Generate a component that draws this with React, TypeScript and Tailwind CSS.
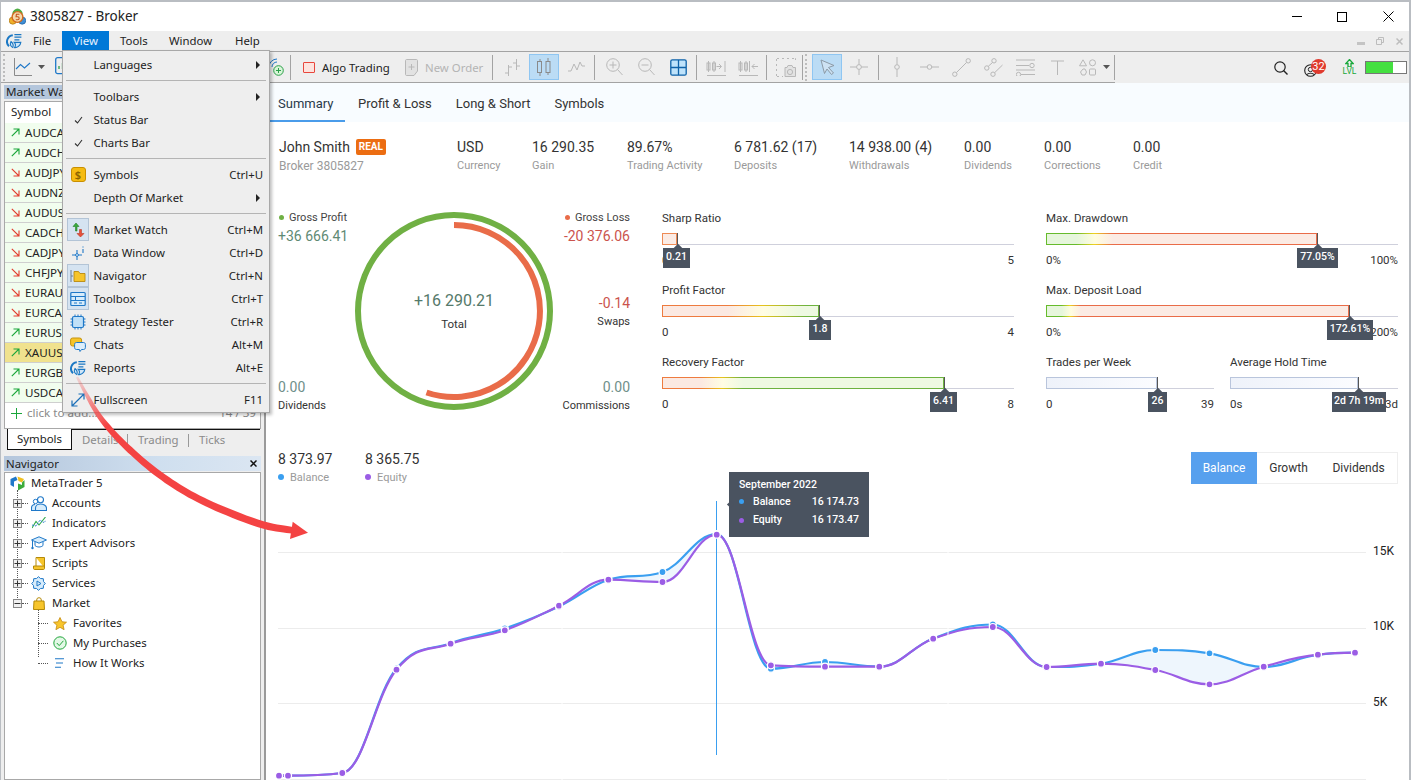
import { ReactNode } from "react";

const UI = "[font-family:'Noto_Sans',sans-serif]";

type P = { x: number; y: number };
type Seg = { c1: P; c2: P; to: P };

const purple: [number, number][] = [
  [279, 775.7], [288, 775.7], [342.3, 773], [396.5, 669.7], [450.6, 643.7], [504.8, 630.3], [559, 605.7], [608.4, 579.7],
  [662.5, 582], [716.7, 534.7], [770.9, 665.3], [825, 666.7], [879.3, 666.7], [933.2, 638.7], [992.8, 627], [1046.6, 667],
  [1101, 663.7], [1155.3, 670], [1209.5, 684.3], [1263.7, 666.7], [1317.9, 654.7], [1355, 652.7],
];
const blue: [number, number][] = [
  [279, 775.7], [288, 775.7], [342.3, 773], [396.5, 668.5], [450.6, 643.2], [504.8, 628.5], [559, 606.5], [608.4, 579.7],
  [662.5, 572], [716.7, 534.2], [770.9, 668.7], [825, 662], [879.3, 666.5], [933.2, 638.5], [992.8, 624.5], [1046.6, 667],
  [1101, 663.7], [1155.3, 650], [1209.5, 653.3], [1263.7, 667], [1317.9, 655], [1355, 652.7],
];

// same curve maths as highcharts spline
function spline(pts: [number, number][]): Seg[] {
  const ctrl = (i: number) => {
    const [x, y] = pts[i];
    const [lx, ly] = pts[Math.max(i - 1, 0)];
    const [nx, ny] = pts[Math.min(i + 1, pts.length - 1)];
    if (i === 0 || i === pts.length - 1) return { l: { x, y }, r: { x, y } };
    let lcy = (1.5 * y + ly) / 2.5;
    let rcy = (1.5 * y + ny) / 2.5;
    const lcx = (1.5 * x + lx) / 2.5;
    const rcx = (1.5 * x + nx) / 2.5;
    const fix = ((rcy - lcy) * (rcx - x)) / (rcx - lcx) + y - rcy;
    lcy += fix;
    rcy += fix;
    if (lcy > ly && lcy > y) { lcy = Math.max(ly, y); rcy = 2 * y - lcy; }
    else if (lcy < ly && lcy < y) { lcy = Math.min(ly, y); rcy = 2 * y - lcy; }
    if (rcy > ny && rcy > y) { rcy = Math.max(ny, y); lcy = 2 * y - rcy; }
    else if (rcy < ny && rcy < y) { rcy = Math.min(ny, y); lcy = 2 * y - rcy; }
    return { l: { x: lcx, y: lcy }, r: { x: rcx, y: rcy } };
  };
  const out: Seg[] = [];
  for (let i = 1; i < pts.length; i++) {
    out.push({ c1: ctrl(i - 1).r, c2: ctrl(i).l, to: { x: pts[i][0], y: pts[i][1] } });
  }
  return out;
}
const toD = (start: [number, number], segs: Seg[]) =>
  `M${start[0]} ${start[1]}` + segs.map((s) => `C${s.c1.x} ${s.c1.y} ${s.c2.x} ${s.c2.y} ${s.to.x} ${s.to.y}`).join("");

const blueSegs = spline(blue);
const purpleSegs = spline(purple);
const areaD = (() => {
  let d = toD(blue[0], blueSegs);
  const n = purple.length;
  d += `L${purple[n - 1][0]} ${purple[n - 1][1]}`;
  for (let i = purpleSegs.length - 1; i >= 0; i--) {
    const s = purpleSegs[i];
    d += `C${s.c2.x} ${s.c2.y} ${s.c1.x} ${s.c1.y} ${purple[i][0]} ${purple[i][1]}`;
  }
  return d + "Z";
})();

const G = "#b8b8b8";

const Ic = ({ w = 16, h = 16, vb, className = "", children }: { w?: number; h?: number; vb?: string; className?: string; children: ReactNode }) => (
  <svg width={w} height={h} viewBox={vb ?? `0 0 ${w} ${h}`} fill="none" className={`shrink-0 ${className}`}>
    {children}
  </svg>
);

const Sep = ({ className = "" }: { className?: string }) => <div className={`w-px h-[25px] bg-[#a3a3a3] shrink-0 ${className}`} />;
const Grip = ({ className = "" }: { className?: string }) => (
  <div className={`w-[3px] h-[27px] shrink-0 border-l-2 border-dotted border-[#bdbdbd] ${className}`} />
);
const Caret = ({ className = "" }: { className?: string }) => (
  <Ic w={7} h={4} className={className}><path d="M0 0H7L3.5 4Z" fill="#555" /></Ic>
);

const ReportsIcon = ({ className = "", w = 16 }: { className?: string; w?: number }) => (
  <Ic w={w} h={w} vb="0 0 16 16" className={className}>
    <path d="M6.8 2.2A6.4 6.4 0 0 0 3 13.2" stroke="#1b78c4" strokeWidth="2" />
    <path d="M5 8.5C3.6 10.6 4.4 13.6 6.8 14.6 7.6 12.4 7 10 5 8.5Z" stroke="#1b78c4" strokeWidth="1.1" fill="#cfe6f8" />
    <path d="M8.6 14.6C11 15 14.5 12.8 14.8 9.4H8.2C9.6 10.8 9.8 12.8 8.6 14.6Z" stroke="#1b78c4" strokeWidth="1.1" fill="#cfe6f8" />
    <path d="M8.4 1.6H15.4M8.4 4.2H15.4M8.4 6.8H13.4" stroke="#1b78c4" strokeWidth="1.2" />
  </Ic>
);

const Logo = () => (
  <Ic w={17} h={18}>
    <circle cx="3.8" cy="12.6" r="3.6" fill="#efb02a" stroke="#a97412" strokeWidth=".7" />
    <circle cx="13.2" cy="12.6" r="3.6" fill="#3f8fd6" stroke="#1c5d9c" strokeWidth=".7" />
    <path d="M3 6C4 2.5 6 .8 8.5.6 11 .8 13 2.5 14 6L8.5 3.5Z" fill="#4fae45" />
    <circle cx="8.5" cy="9" r="5.4" fill="#f3d9ae" stroke="#d2691e" strokeWidth="1.4" />
    <path d="M10.4 6.2H7.4L7.1 8.8H8.8C10.6 8.8 10.6 11.8 8.8 11.8H6.8" stroke="#c4551a" strokeWidth="1.1" />
  </Ic>
);

type MenuRow = { type: "sep" } | { label: string; key?: string; sub?: boolean; check?: boolean; icon?: ReactNode; hi?: boolean };

const menu: MenuRow[] = [
  { label: "Languages", sub: true },
  { type: "sep" },
  { label: "Toolbars", sub: true },
  { label: "Status Bar", check: true },
  { label: "Charts Bar", check: true },
  { type: "sep" },
  {
    label: "Symbols", key: "Ctrl+U",
    icon: <div className="w-[15px] h-[15px] rounded-[3px] bg-[#f5bb12] border border-[#c98f00] text-[#8a6200] text-[11px] leading-[13px] text-center font-semibold">$</div>,
  },
  { label: "Depth Of Market", sub: true },
  { type: "sep" },
  {
    label: "Market Watch", key: "Ctrl+M", hi: true,
    icon: (
      <Ic w={16} h={16}>
        <path d="M5.5 9V4.5H3L6 1l3 3.5H7V9Z" fill="#3cab3c" stroke="#23802a" strokeWidth=".6" />
        <path d="M9.5 7.5V11.5H7L10.5 15 14 11.5H11.5V7.5Z" fill="#e8503a" stroke="#b93a28" strokeWidth=".6" />
      </Ic>
    ),
  },
  {
    label: "Data Window", key: "Ctrl+D",
    icon: (
      <Ic w={16} h={16}>
        <path d="M7 5V15M2 10H12" stroke="#1f78c8" strokeWidth="1.1" />
        <circle cx="7" cy="10" r="1.4" fill="#fff" stroke="#1f78c8" />
        <path d="M13 1.5V2.5M13 4V8" stroke="#1f78c8" strokeWidth="1.1" />
      </Ic>
    ),
  },
  {
    label: "Navigator", key: "Ctrl+N", hi: true,
    icon: (
      <Ic w={16} h={16}>
        <path d="M1 2V14M1 8H3" stroke="#6a7f95" strokeWidth="1" />
        <path d="M4 3.5H8.5L10 5.5H15V13.5H4Z" fill="#f6c42a" stroke="#b98a10" strokeWidth=".9" />
      </Ic>
    ),
  },
  {
    label: "Toolbox", key: "Ctrl+T", hi: true,
    icon: (
      <Ic w={16} h={16}>
        <rect x=".8" y="1.5" width="14.4" height="13" rx="1" fill="#d7ecfb" stroke="#1f78c8" strokeWidth="1.2" />
        <path d="M1 5.5H15M5.5 5.5V9.5M1 9.5H15M4 12H7M9 12H12" stroke="#1f78c8" strokeWidth="1" />
      </Ic>
    ),
  },
  {
    label: "Strategy Tester", key: "Ctrl+R",
    icon: (
      <Ic w={16} h={16}>
        <rect x="2.5" y="2.5" width="11" height="11" rx="1.5" fill="#bfe0f8" stroke="#1f78c8" strokeWidth="1.2" />
        <path d="M5 .5V2.5M8 .5V2.5M11 .5V2.5M5 13.5V15.5M8 13.5V15.5M11 13.5V15.5M.5 5H2.5M.5 8H2.5M.5 11H2.5M13.5 5H15.5M13.5 8H15.5M13.5 11H15.5" stroke="#1f78c8" />
      </Ic>
    ),
  },
  {
    label: "Chats", key: "Alt+M",
    icon: (
      <Ic w={16} h={16}>
        <rect x=".6" y="1" width="11" height="8" rx="2" fill="#f6c42a" stroke="#c6930c" />
        <path d="M6.5 5.5H13.5C14.6 5.5 15.4 6.3 15.4 7.4V10.6C15.4 11.7 14.6 12.5 13.5 12.5H11.5L10 14.5 9.4 12.5H6.5C5.4 12.5 4.6 11.7 4.6 10.6V7.4C4.6 6.3 5.4 5.5 6.5 5.5Z" fill="#dceefb" stroke="#1f78c8" />
      </Ic>
    ),
  },
  { label: "Reports", key: "Alt+E", icon: <ReportsIcon /> },
  { type: "sep" },
  {
    label: "Fullscreen", key: "F11",
    icon: (
      <Ic w={16} h={16}>
        <path d="M2 14L14 2M8.5 2H14V7.5M2 8.5V14H7.5" stroke="#1b6fb8" strokeWidth="1.2" />
      </Ic>
    ),
  },
];

const ViewMenu = () => (
  <div className={`absolute left-[61px] top-[48px] w-[208px] h-[363px] z-20 bg-[#eeeeee] border border-[#a8a8a8] shadow-[2px_2px_3px_rgba(0,0,0,0.25)] text-[11.4px] text-[#222] ${UI} px-[3px] pt-[2px]`}>
    {menu.map((m, i) =>
      "type" in m ? (
        <div key={i} className="h-[9px] flex items-center"><div className="w-full h-px bg-[#b4b4b4]" /></div>
      ) : (
        <div key={i} className="h-[23px] flex items-center relative">
          <div className={`w-[22px] h-[23px] ml-[1px] flex items-center justify-center shrink-0 ${m.hi ? "bg-[#d5e3f1] border border-[#b3c4d6]" : ""}`}>
            {m.check ? <Ic w={9} h={8}><path d="M1 4.5L3.5 7 8 1" stroke="#333" strokeWidth="1.1" /></Ic> : m.icon}
          </div>
          <span className="ml-[4.5px]">{m.label}</span>
          {m.key && <span className="ml-auto mr-[3px]">{m.key}</span>}
          {m.sub && <Ic w={4} h={8} className="ml-auto mr-[6px]"><path d="M0 0L4 4 0 8Z" fill="#222" /></Ic>}
        </div>
      ),
    )}
  </div>
);

const TitleBar = () => (
  <div className="h-[29px] flex items-center pl-[8px] shrink-0">
    <Logo />
    <span className={`ml-[4px] text-[13.5px] text-[#222] ${UI}`}>3805827 - Broker</span>
    <div className="ml-auto flex items-center">
      <div className="w-[10px] h-px bg-black mr-[35px]" />
      <div className="w-[10px] h-[10px] border border-black mr-[36px]" />
      <Ic w={11} h={11} className="mr-[15px]"><path d="M.5.5L10.5 10.5M10.5.5L.5 10.5" stroke="#000" /></Ic>
    </div>
  </div>
);

const MenuBar = () => (
  <div className={`h-[20px] bg-[#eeeeee] flex items-center shrink-0 text-[11.4px] text-[#222] ${UI}`}>
    <ReportsIcon className="ml-[5px]" />
    <span className="ml-[11px] w-[29px]">File</span>
    <span className="w-[47px] h-[20px] bg-[#0078d7] text-[#e8f3ff] text-center leading-[20px]">View</span>
    <span className="ml-[11px] w-[49px]">Tools</span>
    <span className="w-[66px]">Window</span>
    <span>Help</span>
    <div className="ml-auto flex items-center">
      <div className="w-[8px] h-[3px] bg-[#c4c4c4] mt-[5px] mr-[11px]" />
      <Ic w={8} h={8} className="mr-[12px]"><path d="M2.5 2.5V.5H7.5V5.5H5.5M.5 2.5H5.5V7.5H.5Z" stroke="#bdbdbd" /></Ic>
      <Ic w={7} h={7} className="mr-[6px]"><path d="M.5.5L6.5 6.5M6.5.5L.5 6.5" stroke="#bdbdbd" strokeWidth="1.5" /></Ic>
    </div>
  </div>
);

const ToolBar = () => (
  <div className="h-[32px] flex shrink-0 bg-[#eeeeee] border-t border-[#a3a3a3]">
    <div className={`w-[1114px] h-[31px] border-b border-[#a3a3a3] flex items-center shrink-0 text-[11.4px] ${UI}`}>
      <Grip className="ml-[2px]" />
      <Ic w={18} h={18} className="ml-[8px]"><path d="M.5 0V17.5H18" stroke="#8a8a8a" /><path d="M2 11L6.5 6.5 10.5 10 16 5" stroke="#1f78c8" strokeWidth="1.1" /></Ic>
      <Caret className="ml-[6px]" />
      <Ic w={15} h={20} className="ml-[10px]"><rect x=".7" y=".7" width="13.6" height="16" rx="2" stroke="#1f78c8" strokeWidth="1.3" /><path d="M4 12V9M7.5 12V6M11 12V8" stroke="#2ca04a" strokeWidth="1.3" /></Ic>
      <Ic w={16} h={18} className="ml-[198px]">
        <circle cx="10.5" cy="12.5" r="4.8" fill="#d8f5d8" stroke="#2ca04a" />
        <path d="M10.5 10V15M8 12.5H13" stroke="#2ca04a" />
        <path d="M1 9A8 8 0 0 1 9 1M4 9A5 5 0 0 1 9 4" stroke="#1f78c8" />
      </Ic>
      <Sep className="ml-[6px]" />
      <div className="ml-[12px] w-[12px] h-[11px] bg-[#fde3de] border border-[#e8463c] rounded-[1px] shrink-0" />
      <span className="ml-[7px] mt-[1px] w-[68px] text-[#222] whitespace-nowrap">Algo Trading</span>
      <Ic w={13} h={17} className="ml-[15px]"><path d="M1.5.5H11.5C12 .5 12.5 1 12.5 1.5V12L9 16.5H1.5C1 16.5.5 16 .5 15.5V1.5C.5 1 1 .5 1.5.5Z" fill="#e2e2e2" stroke={G} /><path d="M6.5 5V11M3.5 8H9.5" stroke={G} /></Ic>
      <span className="ml-[7px] mt-[1px] w-[58px] text-[#b4b4b4] whitespace-nowrap">New Order</span>
      <Sep className="ml-[9px]" />
      <Ic w={17} h={18} className="ml-[11px]"><path d="M4.5 18V7M1 15H4.5M4.5 9H8M12.5 12V1M9 5H12.5M12.5 8H16" stroke={G} /></Ic>
      <div className="ml-[8px] w-[30px] h-[26px] bg-[#bbdcf5] border border-[#8fc6f2] flex items-center justify-center shrink-0">
        <Ic w={14} h={18}><path d="M3 1V3M3 15V18M11 0V3M11 15V17" stroke="#8a8a8a" /><rect x=".5" y="3.5" width="4" height="11" stroke="#8a8a8a" /><rect x="9" y="3.5" width="4" height="11" stroke="#8a8a8a" /></Ic>
      </div>
      <Ic w={17} h={12} className="ml-[9px]"><path d="M0 10H3L6 3 9 9 12 1 14 5H17" stroke={G} /></Ic>
      <Sep className="ml-[9px]" />
      <Ic w={17} h={18} className="ml-[11px]"><circle cx="7" cy="7" r="6.3" stroke={G} /><path d="M7 3.5V10.5M3.5 7H10.5M11.5 11.5L16.5 17" stroke={G} /></Ic>
      <Ic w={17} h={18} className="ml-[15px]"><circle cx="7" cy="7" r="6.3" stroke={G} /><path d="M3.5 7H10.5M11.5 11.5L16.5 17" stroke={G} /></Ic>
      <Ic w={17} h={17} className="ml-[15px]"><rect x=".8" y=".8" width="15.4" height="15.4" rx="1.5" fill="#bfe3fb" stroke="#0f62a8" strokeWidth="1.3" /><path d="M8.5 1V16M1 8.5H16" stroke="#0f62a8" strokeWidth="1.3" /></Ic>
      <Sep className="ml-[9px]" />
      <Ic w={20} h={18} className="ml-[9px]"><path d="M2.5 3V14M8 3V14" stroke={G} /><rect x="1" y="5" width="3" height="7" stroke={G} /><rect x="6.5" y="5" width="3" height="7" stroke={G} /><path d="M10.5 8.5H15M13 6L15.5 8.5 13 11M19 3V14M1 17.5H20" stroke={G} /></Ic>
      <Ic w={20} h={18} className="ml-[12px]"><path d="M2.5 3V14M8 3V14" stroke={G} /><rect x="1" y="5" width="3" height="7" stroke={G} /><rect x="6.5" y="5" width="3" height="7" stroke={G} /><path d="M20 8.5H14M16.5 6L14 8.5 16.5 11M11.5 3V14M1 17.5H20" stroke={G} /></Ic>
      <Sep className="ml-[8px]" />
      <Ic w={20} h={19} className="ml-[9px]">
        <path d="M.5 3V.5H3M6 .5H8M11 .5H13M16 .5H19.5V3M.5 6V8M.5 11V13M.5 16V18.5H3M6 18.5H7" stroke={G} strokeDasharray="2 1" />
        <path d="M9 18.5V9.5H11L12 7.5H16L17 9.5H19.5V18.5Z" fill="#e2e2e2" stroke={G} /><circle cx="14" cy="14" r="2.6" stroke={G} />
      </Ic>
      <Sep className="ml-[6px]" />
      <Grip className="ml-[2px]" />
      <div className="ml-[4px] w-[30px] h-[26px] bg-[#bbdcf5] border border-[#8fc6f2] flex items-center justify-center shrink-0">
        <Ic w={15} h={16}><path d="M1 1L14 6.5 8.5 8.5 13.5 14 11.5 15.5 7 10 4.5 14.5Z" stroke="#8c9aa6" fill="#cde2f3" /></Ic>
      </div>
      <Ic w={18} h={16} className="ml-[8px]"><path d="M0 8H6.5M11.5 8H18M9 0V5.5M9 10.5V16" stroke={G} /><circle cx="9" cy="8" r="2.4" stroke={G} /></Ic>
      <Sep className="ml-[10px]" />
      <Ic w={16} h={20} className="ml-[10px]"><path d="M8 0V7.5M8 12.5V20" stroke={G} /><circle cx="8" cy="10" r="2.3" stroke={G} /></Ic>
      <Ic w={19} h={6} className="ml-[15px]"><path d="M0 3H7M12 3H19" stroke={G} /><circle cx="9.5" cy="3" r="2.3" stroke={G} /></Ic>
      <Ic w={19} h={19} className="ml-[13px]"><circle cx="2.8" cy="16.2" r="2.2" stroke={G} /><circle cx="16.2" cy="2.8" r="2.2" stroke={G} /><path d="M4.5 14.5L14.5 4.5" stroke={G} /></Ic>
      <Ic w={19} h={19} className="ml-[13px]"><circle cx="2.8" cy="10" r="2.2" stroke={G} /><circle cx="10" cy="2.8" r="2.2" stroke={G} /><circle cx="9" cy="16.2" r="2.2" stroke={G} /><path d="M4.3 8.3L8.5 4.5M10.8 14.5L18.5 7" stroke={G} /></Ic>
      <Ic w={19} h={17} className="ml-[13px]"><path d="M0 1H19M0 6.5H13M0 11H19M5 15.5H19" stroke={G} /><circle cx="16" cy="6.5" r="2.2" stroke={G} /><circle cx="2.5" cy="15.5" r="2.2" stroke={G} /></Ic>
      <Ic w={13} h={15} className="ml-[16px]"><path d="M0 1H13M6.5 1V15" stroke={G} /></Ic>
      <Ic w={17} h={17} className="ml-[15px]"><path d="M4 .8L7.5 6.8H.5Z" stroke={G} /><circle cx="13.5" cy="3.8" r="3" stroke={G} /><path d="M1.5 13L4 10H6L7.5 13 6 16H3Z" stroke={G} /><rect x="10.5" y="10" width="6" height="6" rx="1" stroke={G} /></Ic>
      <Caret className="ml-[7px]" />
      <Sep className="ml-[4px]" />
    </div>
    <div className="flex-1 flex items-center">
      <Ic w={14} h={14} className="ml-[159px]"><circle cx="6" cy="6" r="5.2" stroke="#222" strokeWidth="1.2" /><path d="M9.5 9.5L13.5 13.5" stroke="#222" strokeWidth="1.4" /></Ic>
      <div className="relative ml-[16px] w-[22px] h-[20px] shrink-0">
        <Ic w={13} h={13} className="absolute left-0 top-[6px]"><circle cx="6.5" cy="6.5" r="5.8" stroke="#222" strokeWidth="1.1" /><circle cx="6.5" cy="5.5" r="2.2" stroke="#222" /><path d="M2.5 11C3.5 8.8 9.5 8.8 10.5 11" stroke="#222" /></Ic>
        <div className="absolute left-[7px] top-[1px] w-[15px] h-[15px] rounded-full bg-[#e03a2e] text-white text-[11px] leading-[15px] text-center [font-family:Roboto,sans-serif]">32</div>
      </div>
      <div className="ml-[17px] w-[13px] flex flex-col items-center shrink-0">
        <Ic w={9} h={8}><path d="M3 8V4.5H.8L4.5.5 8.2 4.5H6V8Z" stroke="#18a83a" strokeWidth="1.3" /></Ic>
        <span className="text-[8.5px] leading-[9px] text-[#18a83a] [font-family:Roboto,sans-serif]">LVL</span>
      </div>
      <div className="ml-[9px] w-[42px] h-[13px] border border-[#777] bg-white shrink-0">
        <div className="w-[27px] h-full bg-[#44e040]" />
      </div>
    </div>
  </div>
);

const symbols = ["AUDCAD", "AUDCHF", "AUDJPY", "AUDNZD", "AUDUSD", "CADCHF", "CADJPY", "CHFJPY", "EURAUD", "EURCAD", "EURUSD", "XAUUSD", "EURGBP", "USDCAD"];
const ups = new Set(["AUDCAD", "AUDCHF", "EURUSD", "XAUUSD", "EURGBP", "USDCAD"]);

const MarketWatch = () => (
  <div className={`h-[346px] shrink-0 flex flex-col text-[11.6px] text-[#222] ${UI}`}>
    <div className="h-[14px] mt-[2px] bg-[#b4c6dc] leading-[14px] pl-[2px] whitespace-nowrap overflow-hidden">Market Watch</div>
    <div className="flex-1 mt-[2px] border border-[#a8a8a8] bg-white flex flex-col">
      <div className="h-[21px] pl-[6px] pb-[2px] flex items-center shrink-0 bg-white">Symbol</div>
      {symbols.map((s) => (
        <div key={s} className={`h-[20px] shrink-0 flex items-center border-b border-[#cfcfcf] pl-[6px] ${s === "XAUUSD" ? "bg-[#f0e28e]" : "bg-[#f1fdee]"}`}>
          {ups.has(s) ? (
            <Ic w={9} h={9}><path d="M.8 8.2L8 1M2.5 1H8V6.5" stroke="#1aa63a" strokeWidth="1.1" /></Ic>
          ) : (
            <Ic w={9} h={9}><path d="M.8.8L8 8M2.5 8H8V2.5" stroke="#e23c2e" strokeWidth="1.1" /></Ic>
          )}
          <span className="ml-[5px]">{s}</span>
        </div>
      ))}
      <div className="h-[20px] shrink-0 flex items-center pl-[6px] text-[#8a8a8a]">
        <Ic w={11} h={11}><path d="M5.5 0V11M0 5.5H11" stroke="#1aa63a" /></Ic>
        <span className="ml-[5px]">click to add...</span>
        <span className="ml-auto mr-[4px]">14 / 39</span>
      </div>
    </div>
  </div>
);

const SideTabs = () => (
  <div className={`h-[21px] shrink-0 bg-[#eeeeee] flex items-stretch pr-[1px] pl-[3px] text-[11.4px] text-[#8a8a8a] ${UI}`}>
    <div className="w-[65px] border-x border-b border-[#111] text-[#222] text-center leading-[19px] bg-white">Symbols</div>
    <div className="flex-1 border-t border-[#111] flex items-center">
      <span className="w-[45px] ml-[10px]">Details</span>
      <div className="w-px h-[13px] bg-[#999]" />
      <span className="w-[50px] ml-[10px]">Trading</span>
      <div className="w-px h-[13px] bg-[#999]" />
      <span className="ml-[10px]">Ticks</span>
    </div>
  </div>
);

const treeRows: { label: string; icon: ReactNode; box: "+" | "-" }[] = [
  { label: "Accounts", box: "+", icon: <Ic w={16} h={15}><circle cx="9.5" cy="3.8" r="3" stroke="#1f78c8" strokeWidth="1.1" /><circle cx="4.5" cy="5.5" r="2.2" stroke="#1f78c8" /><path d="M4.5 14.5V12C4.5 9.5 7 8 9.5 8S15.5 9.5 15.5 12V14.5ZM4 8.5C2 8.5.5 10 .5 12V14.5H4.5" stroke="#1f78c8" strokeWidth="1.1" fill="#d7ecfb" /></Ic> },
  { label: "Indicators", box: "+", icon: <Ic w={14} h={12}><path d="M0 11L4 4.5 7 8 13.5 0" stroke="#2ea84a" strokeWidth="1.1" /><path d="M0 8L4 9 8 3 11 5.5 14 4" stroke="#1f78c8" strokeWidth=".9" strokeDasharray="2 1" /></Ic> },
  { label: "Expert Advisors", box: "+", icon: <Ic w={16} h={14}><path d="M8 .8L15.5 4 8 7.2 .5 4Z" fill="#d7ecfb" stroke="#1f78c8" /><path d="M4 6V9.5C6 11.5 10 11.5 12 9.5V6" stroke="#1f78c8" /><path d="M1.5 4.5V11" stroke="#1f78c8" /><circle cx="1.5" cy="12" r="1.2" fill="#1f78c8" /></Ic> },
  { label: "Scripts", box: "+", icon: <Ic w={12} h={13}><path d="M3 .5H11.5V11" stroke="#b58a08" fill="#f7c52b" /><path d="M3 .5V9H11.5V11.5C11.5 12 11 12.5 10.5 12.5H1.5C1 12.5.5 12 .5 11.5V9H3" fill="#f7c52b" stroke="#b58a08" /></Ic> },
  { label: "Services", box: "+", icon: <Ic w={15} h={15}><path d="M7.5.7L9.5 2.5 12.3 2.7 12.5 5.5 14.3 7.5 12.5 9.5 12.3 12.3 9.5 12.5 7.5 14.3 5.5 12.5 2.7 12.3 2.5 9.5.7 7.5 2.5 5.5 2.7 2.7 5.5 2.5Z" fill="#d7ecfb" stroke="#1f78c8" /><path d="M6 5V10L10 7.5Z" stroke="#1f78c8" /></Ic> },
  { label: "Market", box: "-", icon: <Ic w={12} h={13}><path d="M1 4H11L11.5 12.5H.5Z" fill="#f7c52b" stroke="#b58a08" /><path d="M3.7 4V3A2.3 2.3 0 0 1 8.3 3V4" stroke="#b58a08" /></Ic> },
];
const leafRows: { label: string; icon: ReactNode }[] = [
  { label: "Favorites", icon: <Ic w={14} h={13}><path d="M7 .5L9 4.8 13.5 5.2 10.1 8.2 11.1 12.7 7 10.3 2.9 12.7 3.9 8.2.5 5.2 5 4.8Z" fill="#f8c52c" stroke="#c4890c" strokeWidth=".8" /></Ic> },
  { label: "My Purchases", icon: <Ic w={14} h={14}><circle cx="7" cy="7" r="6.2" fill="#e3f8e6" stroke="#22a63c" /><path d="M3.8 7L6.2 9.6 10.4 4.8" stroke="#22a63c" /></Ic> },
  { label: "How It Works", icon: <Ic w={9} h={10}><path d="M0 .7H9M1 5H8M0 9.3H6" stroke="#1f78c8" strokeWidth="1.1" /></Ic> },
];

const Navigator = () => (
  <div className={`flex-1 flex flex-col text-[11.4px] text-[#222] min-h-0 ${UI}`}>
    <div className="h-[15px] mt-[6px] shrink-0 flex items-center pl-[2px] pr-[1px] bg-[linear-gradient(90deg,#b4c6dc,#cfdfef_60%,#dbe6f2)]">
      Navigator
      <Ic w={7} h={7} className="ml-auto mr-[3px]"><path d="M.5.5L6.5 6.5M6.5.5L.5 6.5" stroke="#111" strokeWidth="1.5" /></Ic>
    </div>
    <div className="flex-1 bg-white border border-[#a8a8a8] mt-[1px] relative pl-[5px]">
      <div className="absolute left-[12px] top-[17px] h-[108px] border-l border-dotted border-[#555]" />
      <div className="absolute left-[33px] top-[133px] h-[51px] border-l border-dotted border-[#555]" />
      <div className="h-[20px] flex items-center">
        <Ic w={15} h={15}>
          <path d="M.5 3L6 .5 7.5 4 4 5.5V11L.5 9Z" fill="#1f78c8" />
          <path d="M7.5 .5L14 3 12 6.5 8.5 5Z" fill="#f0c020" />
          <path d="M14.5 4V11L8 14.5V7.5L12 9V6.5Z" fill="#3cab3c" />
        </Ic>
        <span className="ml-[6px]">MetaTrader 5</span>
      </div>
      {treeRows.map((r) => (
        <div key={r.label} className="h-[20px] flex items-center relative">
          <div className="w-[9px] h-[9px] ml-[3px] border border-[#888] bg-[#f0f0f0] flex items-center justify-center shrink-0 relative z-10">
            <Ic w={7} h={7}><path d={r.box === "+" ? "M3.5 .5V6.5M.5 3.5H6.5" : "M.5 3.5H6.5"} stroke="#333" /></Ic>
          </div>
          <div className="w-[6px] border-t border-dotted border-[#555] shrink-0" />
          <div className="w-[17px] ml-[2px] flex justify-center shrink-0">{r.icon}</div>
          <span className="ml-[5px]">{r.label}</span>
        </div>
      ))}
      {leafRows.map((r) => (
        <div key={r.label} className="h-[20px] flex items-center">
          <div className="w-[10px] ml-[28px] border-t border-dotted border-[#555] shrink-0" />
          <div className="w-[15px] ml-[4px] flex justify-center shrink-0">{r.icon}</div>
          <span className="ml-[6px]">{r.label}</span>
        </div>
      ))}
    </div>
  </div>
);

const Stat = ({ value, label, className = "" }: { value: string; label: string; className?: string }) => (
  <div className={className}>
    <div className="text-[14px] leading-[18px] text-[#333]">{value}</div>
    <div className="text-[11px] leading-[20px] text-[#9a9a9a]">{label}</div>
  </div>
);

const SummaryHead = () => (
  <div className="h-[89px] shrink-0 pt-[16px] flex">
    <div className="w-[179px] shrink-0 pl-[1px]">
      <div className="flex items-center h-[18px]">
        <span className="text-[14px] text-[#333]">John Smith</span>
        <span className="ml-[6px] w-[30px] h-[16px] rounded-[2px] bg-[#ec6d12] text-white text-[10px] font-bold leading-[16px] text-center">REAL</span>
      </div>
      <div className="text-[12px] leading-[20px] text-[#9a9a9a]">Broker 3805827</div>
    </div>
    <Stat value="USD" label="Currency" className="w-[75px]" />
    <Stat value="16 290.35" label="Gain" className="w-[95px]" />
    <Stat value="89.67%" label="Trading Activity" className="w-[107px]" />
    <Stat value="6 781.62 (17)" label="Deposits" className="w-[115px]" />
    <Stat value="14 938.00 (4)" label="Withdrawals" className="w-[115px]" />
    <Stat value="0.00" label="Dividends" className="w-[80px]" />
    <Stat value="0.00" label="Corrections" className="w-[89px]" />
    <Stat value="0.00" label="Credit" />
  </div>
);

const Corner = ({ value, label, color, dot, className = "" }: { value: string; label: string; color: string; dot?: string; className?: string }) => (
  <div className={className}>
    {dot ? (
      <>
        <div className="text-[11px] leading-[14px] text-[#444]"><span className={`inline-block w-[5px] h-[5px] rounded-full mx-[1px] mb-[1px] mr-[5px] ${dot}`} />{label}</div>
        <div className={`text-[14px] leading-[22px] ${color}`}>{value}</div>
      </>
    ) : (
      <>
        <div className={`text-[14px] leading-[20px] ${color}`}>{value}</div>
        <div className="text-[11px] leading-[18px] text-[#333]">{label}</div>
      </>
    )}
  </div>
);

const Donut = () => (
  <div className="w-[352px] h-[204px] shrink-0 flex relative">
    <div className="w-[76px] shrink-0 flex flex-col justify-between">
      <Corner value="+36 666.41" label="Gross Profit" color="text-[#5f8a74]" dot="bg-[#6fb044]" />
      <Corner value="0.00" label="Dividends" color="text-[#6f8f8a]" />
    </div>
    <svg width="200" height="200" viewBox="0 0 200 200" className="shrink-0">
      <circle cx="100" cy="100" r="96" fill="none" stroke="#70b044" strokeWidth="6" />
      <path d="M100 14A86 86 0 1 1 72.5 181.5" fill="none" stroke="#e96c49" strokeWidth="6" />
    </svg>
    <div className="flex-1 flex flex-col items-end text-right">
      <Corner value="-20 376.06" label="Gross Loss" color="text-[#cb534d]" dot="bg-[#e96c49]" />
      <Corner value="-0.14" label="Swaps" color="text-[#cb534d]" className="mt-[46px]" />
      <Corner value="0.00" label="Commissions" color="text-[#6f8f8a]" className="mt-auto whitespace-nowrap -ml-[20px]" />
    </div>
    <div className="absolute left-[76px] w-[200px] top-[79px] text-center">
      <div className="text-[16px] leading-[22px] text-[#55796a]">+16 290.21</div>
      <div className="text-[11.5px] leading-[24px] text-[#333]">Total</div>
    </div>
  </div>
);

const Meter = ({ label, fill, outer, inner, min, max, tipLeft, tipW, value }: {
  label: string; fill: number; outer: string; inner: string; min: string; max: string; tipLeft: number; tipW: number; value: string;
}) => (
  <div className="h-[72px]">
    <div className="text-[11.5px] leading-[14px] h-[22px] text-[#333] whitespace-nowrap">{label}</div>
    <div className="relative h-[12px] border-b border-[#cfd0dc]">
      <div className={`h-[12px] p-px border-r border-r-[#555] ${outer}`} style={{ width: fill }}>
        <div className={`h-full ${inner}`} />
      </div>
      <div className="absolute top-[15px] h-[20px] z-10 bg-[#4a5360] text-white text-[10.5px] font-medium leading-[18px] text-center whitespace-nowrap" style={{ left: tipLeft, width: tipW }}>
        {value}
        <div className="absolute -top-[3px] w-[6px] h-[6px] bg-[#4a5360] rotate-45" style={{ left: fill - tipLeft - 3 }} />
      </div>
    </div>
    <div className="flex justify-between text-[11.5px] leading-[14px] mt-[8px] text-[#333]"><span>{min}</span><span>{max}</span></div>
  </div>
);

const Metrics = () => (
  <div className="flex-1 grid grid-cols-2 gap-x-[32px] content-start ml-[32px]">
    <Meter label="Sharp Ratio" fill={16} outer="bg-[#ee8a55]" inner="bg-[#fbebe4]" min="0" max="5" tipLeft={1} tipW={27} value="0.21" />
    <Meter label="Max. Drawdown" fill={272} outer="bg-[linear-gradient(90deg,#66bb2c_0,#66bb2c_30px,#ecd420_48px,#e96c49_66px)]" inner="bg-[linear-gradient(90deg,#e6f6dc_0,#e6f6dc_30px,#fffde0_48px,#fbebe4_66px)]" min="0%" max="100%" tipLeft={251} tipW={41} value="77.05%" />
    <Meter label="Profit Factor" fill={158} outer="bg-[linear-gradient(90deg,#ee7b3f_0,#ee7b3f_65px,#e8c41e_100px,#6db23f_145px)]" inner="bg-[linear-gradient(90deg,#fbe9e2_0,#fbe9e2_65px,#fffde3_100px,#eef9e2_135px)]" min="0" max="4" tipLeft={147} tipW={22} value="1.8" />
    <Meter label="Max. Deposit Load" fill={304} outer="bg-[linear-gradient(90deg,#66bb2c_0,#66bb2c_15px,#ecd420_24px,#e96c49_34px)]" inner="bg-[linear-gradient(90deg,#e6f6dc_0,#e6f6dc_15px,#fffde0_24px,#fbebe4_34px)]" min="0%" max="200%" tipLeft={281} tipW={46} value="172.61%" />
    <Meter label="Recovery Factor" fill={283} outer="bg-[linear-gradient(90deg,#ee7b3f_0,#ee7b3f_38px,#e8c41e_60px,#6db23f_80px)]" inner="bg-[linear-gradient(90deg,#fbe9e2_0,#fbe9e2_38px,#fffde3_60px,#eef9e2_80px)]" min="0" max="8" tipLeft={268} tipW={27} value="6.41" />
    <div className="grid grid-cols-2 gap-x-[16px]">
      <Meter label="Trades per Week" fill={112} outer="bg-[#b9c5dc]" inner="bg-[linear-gradient(90deg,#eef2fa,#fbfcff)]" min="0" max="39" tipLeft={102} tipW={19} value="26" />
      <Meter label="Average Hold Time" fill={129} outer="bg-[#b9c5dc]" inner="bg-[linear-gradient(90deg,#eef2fa,#fbfcff)]" min="0s" max="3d" tipLeft={102} tipW={54} value="2d 7h 19m" />
    </div>
  </div>
);

const ChartHead = () => (
  <div className="h-[39px] shrink-0 flex items-start justify-between">
    <div className="flex">
      {[{ v: "8 373.97", l: "Balance", d: "bg-[#3a9ff0]", w: "w-[87px]" }, { v: "8 365.75", l: "Equity", d: "bg-[#9b5de5]", w: "w-[80px]" }].map((s) => (
        <div key={s.l} className={s.w}>
          <div className="text-[14px] leading-[16px] text-[#333]">{s.v}</div>
          <div className="text-[11px] leading-[22px] text-[#9a9a9a]"><span className={`inline-block w-[6px] h-[6px] rounded-full mb-[1px] mr-[6px] ${s.d}`} />{s.l}</div>
        </div>
      ))}
    </div>
    <div className="h-[32px] w-[207px] mt-[1px] flex border border-[#eeeeee] text-[12px] text-[#333] mr-[11px]">
      <div className="w-[66px] -my-px -ml-px bg-[#57a0ee] text-white flex items-center justify-center">Balance</div>
      <div className="w-[63px] flex items-center justify-center">Growth</div>
      <div className="flex-1 flex items-center justify-center">Dividends</div>
    </div>
  </div>
);

const Chart = () => (
  <div className="relative flex-1 -ml-[12px] min-h-0">
    <svg width="1143" height="290" viewBox="266 490 1143 290" className="block">
      {[552.5, 628.5, 703.5, 779.5].map((y) => (
        <path key={y} d={`M278 ${y}H1366`} stroke="#ececec" strokeWidth="1" />
      ))}
      <path d={areaD} fill="#eef6fd" />
      <path d={toD(blue[0], blueSegs)} fill="none" stroke="#3a9ff0" strokeWidth="2.2" />
      <path d={toD(purple[0], purpleSegs)} fill="none" stroke="#9b5de5" strokeWidth="2.2" />
      <path d="M716.5 501V755" stroke="#3a9ff0" strokeWidth="1" />
      {blue.map(([x, y]) => (
        <circle key={`b${x}`} cx={x} cy={y} r="3.5" fill="#3a9ff0" stroke="#fff" strokeWidth="1.2" />
      ))}
      {purple.map(([x, y]) => (
        <circle key={`p${x}`} cx={x} cy={y} r="3.5" fill="#9b5de5" stroke="#fff" strokeWidth="1.2" />
      ))}
      <path d="M562 540V780M948 540V780" stroke="#fff" strokeWidth="1" />
    </svg>
    <div className="absolute left-[1107px] top-[54px] text-[12px] leading-[14px] text-[#222]">15K</div>
    <div className="absolute left-[1107px] top-[129px] text-[12px] leading-[14px] text-[#222]">10K</div>
    <div className="absolute left-[1107px] top-[205px] text-[12px] leading-[14px] text-[#222]">5K</div>
    <div className="absolute left-[463px] -top-[18px] w-[140px] h-[65px] bg-[#4a5360] text-white text-[10.5px] font-medium px-[10px] pt-[6px]">
      <div className="absolute -left-[1px] top-[30px] w-[5px] h-[5px] bg-[#4a5360] rotate-45" />
      <div className="leading-[14px]">September 2022</div>
      {[{ l: "Balance", v: "16 174.73", d: "bg-[#3a9ff0]" }, { l: "Equity", v: "16 173.47", d: "bg-[#9b5de5]" }].map((r) => (
        <div key={r.l} className="flex items-center h-[18px] mt-[0.5px]">
          <span className={`w-[5px] h-[5px] rounded-full ${r.d}`} />
          <span className="ml-[9px]">{r.l}</span>
          <span className="ml-auto">{r.v}</span>
        </div>
      ))}
    </div>
  </div>
);

// red annotation arrow laid over everything
const ArrowOverlay = () => {
  const c: [number, number, number][] = [[77, 377, 1.2], [100, 417, 2.6], [130, 450, 3.3], [167, 480, 3.5], [207, 503, 3.6], [260, 524, 3.7], [294, 530.5, 3.3]];
  // catmull-rom samples, so the taper has no corners
  const s: [number, number, number][] = [];
  for (let i = 0; i < c.length - 1; i++) {
    const p0 = c[Math.max(i - 1, 0)];
    const p1 = c[i];
    const p2 = c[i + 1];
    const p3 = c[Math.min(i + 2, c.length - 1)];
    for (let k = 0; k < 10; k++) {
      const t = k / 10;
      const f = (j: number) =>
        0.5 * (2 * p1[j] + (p2[j] - p0[j]) * t + (2 * p0[j] - 5 * p1[j] + 4 * p2[j] - p3[j]) * t * t + (3 * p1[j] - p0[j] - 3 * p2[j] + p3[j]) * t * t * t);
      s.push([f(0), f(1), f(2)]);
    }
  }
  s.push(c[c.length - 1]);
  const left: string[] = [];
  const right: string[] = [];
  s.forEach(([x, y, w], i) => {
    const [ax, ay] = s[Math.max(i - 1, 0)];
    const [bx, by] = s[Math.min(i + 1, s.length - 1)];
    const len = Math.hypot(bx - ax, by - ay);
    const nx = -(by - ay) / len;
    const ny = (bx - ax) / len;
    left.push(`${(x + nx * w).toFixed(1)} ${(y + ny * w).toFixed(1)}`);
    right.unshift(`${(x - nx * w).toFixed(1)} ${(y - ny * w).toFixed(1)}`);
  });
  return (
    <svg width="1411" height="780" className="absolute -left-[1px] -top-[2px] z-30 pointer-events-none">
      <defs>
        <linearGradient id="fade" gradientUnits="userSpaceOnUse" x1="77" y1="377" x2="108" y2="425">
          <stop offset="0" stopColor="#f44343" stopOpacity=".15" />
          <stop offset="1" stopColor="#f44343" stopOpacity="1" />
        </linearGradient>
      </defs>
      <path d={`M${left.join("L")}L${right.join("L")}Z`} fill="url(#fade)" />
      <path d="M308 532.7L292.7 521.7 290 539Z" fill="#f44343" />
    </svg>
  );
};

export default function App() {
  return (
    <div className="relative w-[1411px] h-[780px] overflow-hidden bg-white flex flex-col border-t-2 border-x-2 border-[#b9bdc2] border-l-[1px]">
      <TitleBar />
      <MenuBar />
      <ToolBar />
      <div className="flex-1 flex min-h-0">
        <div className="w-[265px] shrink-0 bg-[#eeeeee] border-r-2 border-[#9a9a9a] flex flex-col pl-[3px] pr-[3px]">
          <MarketWatch />
          <SideTabs />
          <Navigator />
        </div>
        <div className="flex-1 flex flex-col pl-[12px] min-w-0 [font-family:Roboto,sans-serif]">
          <div className="h-[39px] -ml-[12px] pl-[12px] bg-[#f8fcff] flex text-[13px] text-[#333] shrink-0">
            <div className="w-[75px] -ml-[8px] pl-[8px] h-[39px] border-b-2 border-[#4a9cea] leading-[41px] text-[#2a3a4a]">Summary</div>
            <span className="ml-[13px] leading-[41px]">Profit &amp; Loss</span>
            <span className="ml-[24px] leading-[41px]">Long &amp; Short</span>
            <span className="ml-[24px] leading-[41px]">Symbols</span>
          </div>
          <SummaryHead />
          <div className="h-[240px] shrink-0 flex pr-[11px]">
            <Donut />
            <Metrics />
          </div>
          <ChartHead />
          <Chart />
        </div>
      </div>
      <ViewMenu />
      <ArrowOverlay />
    </div>
  );
}
